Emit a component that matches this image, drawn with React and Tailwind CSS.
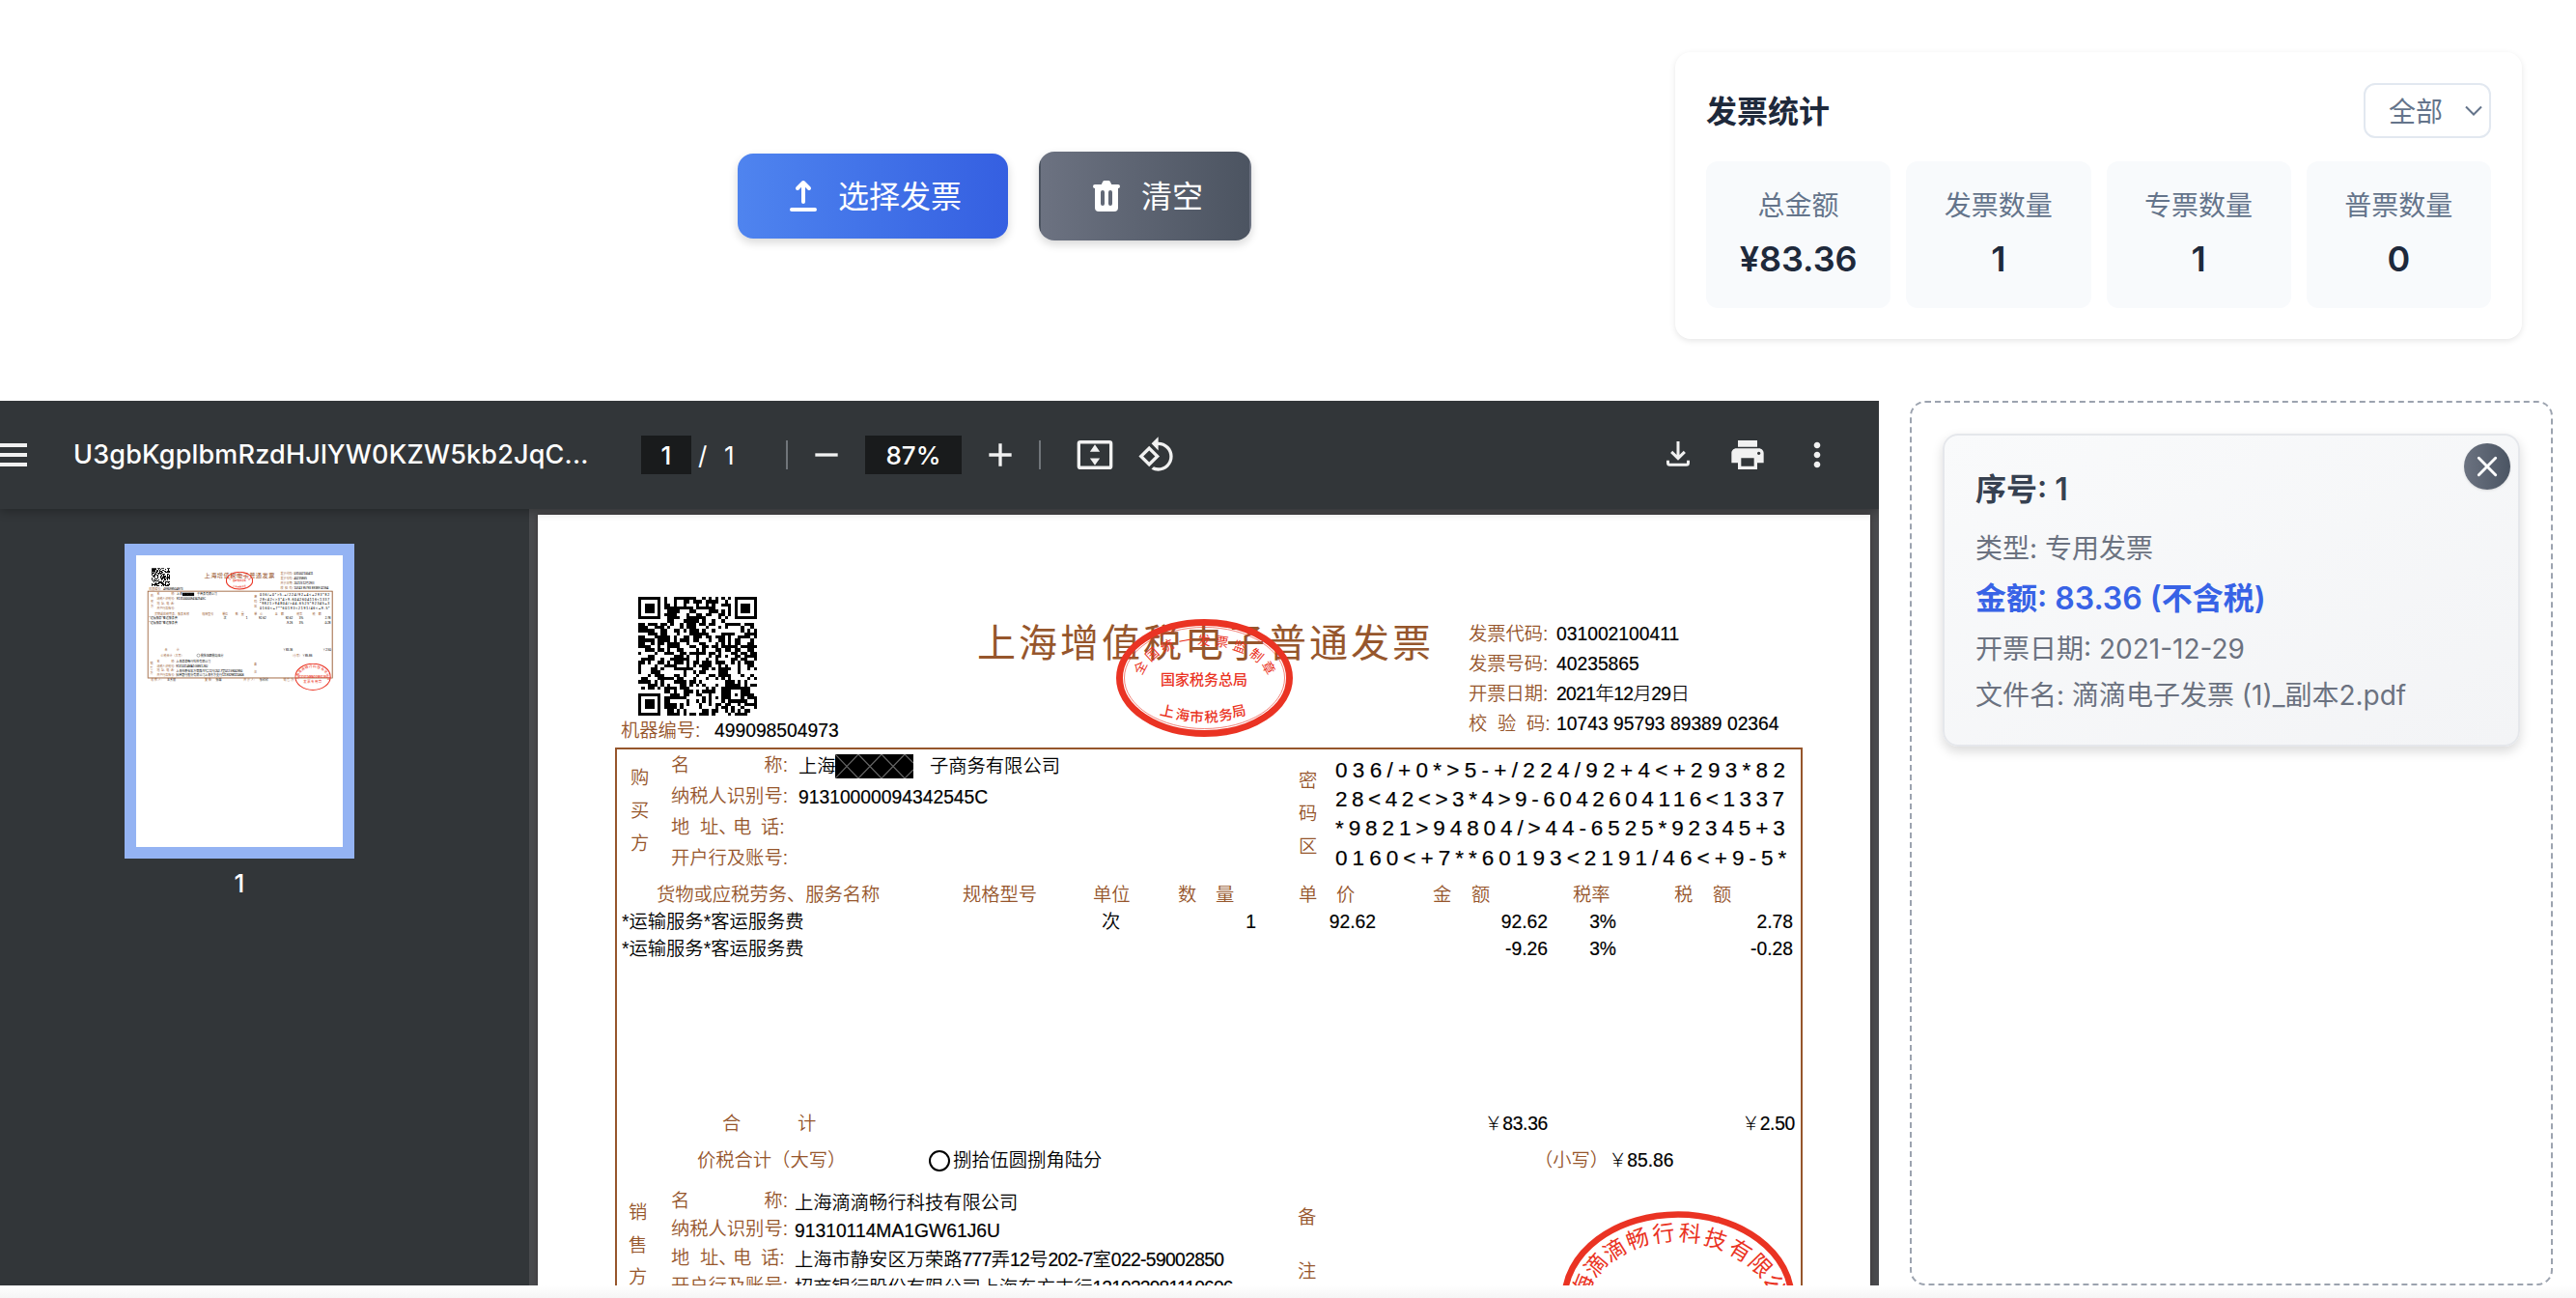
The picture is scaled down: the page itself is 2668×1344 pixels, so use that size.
import React from "react";

const UI = "font-['Inter','Noto_Sans_CJK_SC',sans-serif]";
const DOC = "font-['Liberation_Sans','Noto_Sans_CJK_SC',sans-serif]";

/* ---------- icons ---------- */

function UploadIcon() {
  return (
    <svg viewBox="0 0 20 20" className="size-10 shrink-0" fill="currentColor">
      <path
        fillRule="evenodd"
        clipRule="evenodd"
        d="M3 17a1 1 0 011-1h12a1 1 0 110 2H4a1 1 0 01-1-1zM6.293 6.707a1 1 0 010-1.414l3-3a1 1 0 011.414 0l3 3a1 1 0 01-1.414 1.414L11 5.414V13a1 1 0 11-2 0V5.414L7.707 6.707a1 1 0 01-1.414 0z"
      />
    </svg>
  );
}

function TrashIcon() {
  return (
    <svg viewBox="0 0 20 20" className="size-10 shrink-0" fill="currentColor">
      <path
        fillRule="evenodd"
        clipRule="evenodd"
        d="M9 2a1 1 0 00-.894.553L7.382 4H4a1 1 0 000 2v10a2 2 0 002 2h8a2 2 0 002-2V6a1 1 0 100-2h-3.382l-.724-1.447A1 1 0 0011 2H9zM7 8a1 1 0 012 0v6a1 1 0 11-2 0V8zm5-1a1 1 0 00-1 1v6a1 1 0 102 0V8a1 1 0 00-1-1z"
      />
    </svg>
  );
}

function ToolIcon({ d, className = "size-10" }) {
  return (
    <svg viewBox="0 0 24 24" className={"shrink-0 " + className} fill="#f1f1f1">
      <path fillRule="evenodd" d={d} />
    </svg>
  );
}

const MENU = "M3 18h18v-2H3v2zm0-5h18v-2H3v2zm0-7v2h18V6H3z";
const MINUS = "M5 11h14v2H5z";
const PLUS = "M19 13h-6v6h-2v-6H5v-2h6V5h2v6h6v2z";
const FIT =
  "M3 3h18a2 2 0 0 1 2 2v14a2 2 0 0 1-2 2H3a2 2 0 0 1-2-2V5a2 2 0 0 1 2-2zm0 2.1v13.8h18V5.1H3zM12 5.6l3.1 4.4H8.900zM12 18.500l3.100-4.400H8.900z";
const ROTATE =
  "M7.34 6.41L.86 12.9l6.49 6.48 6.49-6.48-6.5-6.49zM3.69 12.9l3.66-3.66L11 12.9l-3.66 3.66-3.65-3.66zm15.67-6.26C17.61 4.88 15.3 4 13 4V.76L8.76 5 13 9.24V6c1.79 0 3.58.68 4.95 2.05 2.73 2.73 2.73 7.17 0 9.9C16.58 19.32 14.79 20 13 20c-.97 0-1.94-.21-2.84-.61l-1.49 1.49C10.02 21.62 11.51 22 13 22c2.3 0 4.61-.88 6.36-2.64 3.52-3.51 3.52-9.21 0-12.72z";
const PRINT =
  "M19 8H5c-1.66 0-3 1.34-3 3v6h4v4h12v-4h4v-6c0-1.66-1.34-3-3-3zm-3 11H8v-5h8v5zm3-7c-.55 0-1-.45-1-1s.45-1 1-1 1 .45 1 1-.45 1-1 1zm-1-9H6v4h12V3z";
const MORE =
  "M12 8c1.1 0 2-.9 2-2s-.9-2-2-2-2 .9-2 2 .9 2 2 2zm0 2c-1.1 0-2 .9-2 2s.9 2 2 2 2-.9 2-2-.9-2-2-2zm0 6c-1.1 0-2 .9-2 2s.9 2 2 2 2-.9 2-2-.9-2-2-2z";

function DownloadIcon() {
  return (
    <svg viewBox="0 0 24 24" className="size-10 shrink-0" fill="none" stroke="#f1f1f1" strokeWidth="1.8">
      <path d="M12 3.600V14M7.900 10.100L12 14.200l4.100-4.100M5.700 15.500V17a1.200 1.200 0 0 0 1.200 1.200h10.200a1.200 1.200 0 0 0 1.200-1.200v-1.500" />
    </svg>
  );
}

/* ---------- header ---------- */

function Stat({ label, value }) {
  return (
    <div className="flex flex-col items-center rounded-xl bg-[#f8fafc] pt-[25px]">
      <div className="mb-[7px] text-[28px] leading-[42px] text-[#64748b]">{label}</div>
      <div className="text-[36px] leading-[54px] font-semibold text-[#1e293b]">{value}</div>
    </div>
  );
}

function Header() {
  return (
    <header className="flex h-[415px] items-start">
      <div className="mt-[157px] ml-[764px] flex items-center gap-8 text-[32px] text-white">
        <button className="flex h-[88px] w-[280px] items-center gap-4 rounded-2xl bg-linear-to-r from-[#4f84ef] to-[#355fe1] pl-12 shadow-[0_4px_10px_rgba(0,0,0,0.16)]">
          <UploadIcon />
          <span className="pt-[2px]">选择发票</span>
        </button>
        <button className="flex h-[92px] w-[220px] items-center gap-4 rounded-2xl border-2 border-transparent bg-linear-to-r from-[#6c7281] to-[#4c5461] pl-12 shadow-[0_4px_10px_rgba(0,0,0,0.16)]">
          <TrashIcon />
          <span className="pt-[2px]">清空</span>
        </button>
      </div>
      <section className="mt-[54px] ml-[439px] h-[297px] w-[877px] rounded-2xl bg-white p-8 shadow-[0_2px_6px_rgba(0,0,0,0.10)]">
        <div className="mb-6 flex h-[57px] items-center justify-between">
          <h2 className="pt-[3px] text-[32px] font-semibold text-[#1e293b]">发票统计</h2>
          <div className="flex h-[57px] w-[132px] items-center justify-between rounded-xl border-2 border-[#e2e8f0] pr-[7px] pl-6 text-[28px] text-[#64748b]">
            <span className="pt-[2px]">全部</span>
            <svg viewBox="0 0 18 11" className="h-[11px] w-[18px]" fill="none" stroke="#64748b" strokeWidth="2">
              <path d="M1 1.500l8 8 8-8" />
            </svg>
          </div>
        </div>
        <div className="grid h-[152px] grid-cols-4 gap-4">
          <Stat label="总金额" value="¥83.36" />
          <Stat label="发票数量" value="1" />
          <Stat label="专票数量" value="1" />
          <Stat label="普票数量" value="0" />
        </div>
      </section>
    </header>
  );
}

/* ---------- invoice document ---------- */

const QR_SIZE = 37;

function buildQr() {
  let seed = 20211229;
  const rnd = () => {
    seed = (seed * 1103515245 + 12345) % 2147483648;
    return seed / 2147483648;
  };
  const ring = (x, y, cx, cy, r) => {
    const d = Math.max(Math.abs(x - cx), Math.abs(y - cy));
    return d <= r ? d : -1;
  };
  let path = "";
  for (let y = 0; y < QR_SIZE; y++) {
    for (let x = 0; x < QR_SIZE; x++) {
      let on = rnd() > 0.5;
      for (const [cx, cy] of [[3, 3], [33, 3], [3, 33]]) {
        const d = ring(x, y, cx, cy, 4);
        if (d >= 0) on = d === 3 || d <= 1;
      }
      const a = ring(x, y, 30, 30, 2);
      if (a >= 0) on = a !== 1;
      if (on) path += `M${x} ${y}h1v1h-1z`;
    }
  }
  return path;
}

const QR_PATH = buildQr();

function Glyphs({ items, size, weight = 400 }) {
  return items.map(([ch, x, y, r], i) => (
    <text
      key={i}
      transform={`translate(${x} ${y}) rotate(${r})`}
      textAnchor="middle"
      dominantBaseline="central"
      fontSize={size}
      fontWeight={weight}
      fill="#ea3323"
    >
      {ch}
    </text>
  ));
}

function TaxSeal() {
  return (
    <svg viewBox="0 0 183 122" className="absolute top-[108px] left-[599px] h-[122px] w-[183px]">
      <ellipse cx="91.5" cy="61" rx="88" ry="57.500" fill="none" stroke="#ea3323" strokeWidth="7" />
      <ellipse cx="91.5" cy="61" rx="83" ry="52.500" fill="none" stroke="#ea3323" strokeOpacity="0.6" strokeWidth="1" />
      <Glyphs
        size={13.5}
        items={[
          ["全", 25.5, 50.5, -62],
          ["国", 37.5, 37, -42],
          ["统", 53, 28, -25],
          ["一", 71.5, 23, -10],
          ["发", 91, 22.5, 2],
          ["票", 109.5, 24, 8],
          ["监", 128, 29, 20],
          ["制", 145, 38, 40],
          ["章", 157.5, 50.5, 60],
        ]}
      />
      <text x="91" y="62" textAnchor="middle" dominantBaseline="central" fontSize="15" fontWeight="500" fill="#ea3323">
        国家税务总局
      </text>
      <Glyphs
        size={14.5}
        weight={500}
        items={[
          ["上", 53, 95.5, 12],
          ["海", 69, 99.5, 8],
          ["市", 83.5, 101.5, 2],
          ["税", 98.5, 101.5, -2],
          ["务", 113.5, 99.500, -8],
          ["局", 127, 95.500, -12],
        ]}
      />
    </svg>
  );
}

function CompanySeal() {
  return (
    <svg viewBox="0 0 242 182" className="absolute top-[721px] left-[1060px] h-[182px] w-[242px]">
      <ellipse cx="121" cy="91" rx="117.500" ry="87.500" fill="none" stroke="#ea3323" strokeWidth="6.5" />
      <Glyphs
        size={23}
        items={[
          ["上", 18, 99, -88],
          ["海", 22.5, 77, -68],
          ["滴", 36, 56, -50],
          ["滴", 55.5, 40.5, -32],
          ["畅", 79, 29, -20],
          ["行", 106, 23.5, -7],
          ["科", 133.5, 23.5, 6],
          ["技", 160, 29.5, 18],
          ["有", 185.5, 41, 32],
          ["限", 206, 56.5, 46],
          ["公", 221, 77, 64],
          ["司", 225, 99, 84],
        ]}
      />
      <text x="121" y="91" textAnchor="middle" dominantBaseline="central" fontSize="18" fontWeight="700" fill="#ea3323">
        91310114MA1GW61J6U
      </text>
      <text x="121" y="122" textAnchor="middle" dominantBaseline="central" fontSize="22" letterSpacing="3" fill="#ea3323">
        发票专用章
      </text>
    </svg>
  );
}

const BROWN = "font-[350] text-[#96562c] ";
const INK = "text-black [-webkit-text-stroke:0.2px_#000] ";
const HAN = "font-[350] text-black ";

function PartyLabels({ row }) {
  return (
    <div className={BROWN + "w-[121px] shrink-0"}>
      <div className={"flex items-center justify-between " + row}>
        <span>名</span>
        <span>称:</span>
      </div>
      <div className={"flex items-center " + row}>纳税人识别号:</div>
      <div className={"flex items-center " + row}>
        <span className="w-[30px]">地</span>
        <span className="w-[34px]">址、</span>
        <span className="w-[29px]">电</span>
        <span>话:</span>
      </div>
      <div className={"flex items-center " + row}>开户行及账号:</div>
    </div>
  );
}

function VerticalLabel({ text, className, step }) {
  return (
    <div className={BROWN + "shrink-0 " + className}>
      {text.split("").map((c) => (
        <div key={c} className={"flex items-center " + step}>
          {c}
        </div>
      ))}
    </div>
  );
}

function MetaRow({ label, children }) {
  return (
    <div className="flex h-[31px] items-center">
      <div className={BROWN + "w-[91px] whitespace-pre"}>{label}</div>
      <div className={INK}>{children}</div>
    </div>
  );
}

function ItemRow({ name, unit, qty, price, amount, rate, tax }) {
  return (
    <div className="flex h-[27.5px] items-center pl-[5px] text-right">
      <span className={HAN + "w-[497px] text-left"}>{name}</span>
      <span className={HAN + "w-[60px] text-left"}>{unit}</span>
      <span className={INK + "w-[100px]"}>{qty}</span>
      <span className={INK + "w-[124px]"}>{price}</span>
      <span className={INK + "w-[178px]"}>{amount}</span>
      <span className={INK + "w-[71px]"}>{rate}</span>
      <span className={INK + "w-[183px]"}>{tax}</span>
    </div>
  );
}

function Redaction() {
  return (
    <svg viewBox="0 0 81 25" className="mr-[17px] h-[25px] w-[81px]" fill="none" stroke="#666" strokeWidth="1.2">
      <rect width="81" height="25" fill="#000" stroke="none" />
      <path d="M0 0l24 25L48 0l24 25 9-9M0 25L24 0l24 25L72 0l9 9" />
    </svg>
  );
}

function Invoice({ frame = "" }) {
  return (
    <div className={DOC + " relative h-[1947px] w-[1380px] bg-white text-[19.3px] leading-none whitespace-nowrap"}>
      <div className="flex h-[241px]">
        <div className="w-[455px] pt-[85px] pl-[86px]">
          <svg viewBox="0 0 37 37" className="ml-[18px] size-[123px]" shapeRendering="crispEdges">
            <path d={QR_PATH} />
          </svg>
          <div className="mt-[4px] flex h-6 items-center">
            <span className={BROWN + "w-[97px]"}>机器编号:</span>
            <span className={INK}>499098504973</span>
          </div>
        </div>
        <h1 className="mt-[103px] flex h-[60px] w-[509px] items-center text-[40px] font-normal tracking-[3px] text-[#96562c]">
          上海增值税电子普通发票
        </h1>
        <div className="pt-[108px]">
          <MetaRow label="发票代码:">031002100411</MetaRow>
          <MetaRow label="发票号码:">40235865</MetaRow>
          <MetaRow label="开票日期:">
            <span className="tracking-[-0.6px]">
              2021<span className="font-light">年</span>12<span className="font-light">月</span>29
              <span className="font-light">日</span>
            </span>
          </MetaRow>
          <MetaRow label={"校  验  码:"}>10743 95793 89389 02364</MetaRow>
        </div>
      </div>

      <div className={"ml-20 h-[577px] w-[1230px] border-2 border-[#96562c] " + frame}>
        <div className="flex h-[136px]">
          <VerticalLabel text="购买方" className="w-14 pt-[13px] pl-[14px]" step="h-[34px]" />
          <PartyLabels row="h-8 pt-[2px]" />
          <div className="ml-[11px] w-[518px] shrink-0">
            <div className={HAN + "flex h-[35px] items-center"}>
              <span className="w-[38px]">上海</span>
              <Redaction />
              <span>子商务有限公司</span>
            </div>
            <div className={INK + "flex h-[30px] items-center"}>91310000094342545C</div>
          </div>
          <VerticalLabel text="密码区" className="w-[38px] pt-[16px]" step="h-[34px]" />
          <div className="pt-[7px] text-[22.500px] text-black [-webkit-text-stroke:0.2px_#000]">
            <div className="flex h-[30.3px] items-center tracking-[5.3px]">{"036/+0*>5-+/224/92+4<+293*82"}</div>
            <div className="flex h-[30.3px] items-center tracking-[4.52px]">{"28<42<>3*4>9-6042604116<1337"}</div>
            <div className="flex h-[30.3px] items-center tracking-[4.9px]">{"*9821>94804/>44-6525*92345+3"}</div>
            <div className="flex h-[30.3px] items-center tracking-[5.05px]">{"0160<+7**60193<2191/46<+9-5*"}</div>
          </div>
        </div>

        <div className={BROWN + "flex h-[29px] items-center pl-[41px]"}>
          <span className="w-[317px]">货物或应税劳务、服务名称</span>
          <span className="w-[135px]">规格型号</span>
          <span className="w-[88px]">单位</span>
          <span className="w-[39px]">数</span>
          <span className="w-[86px]">量</span>
          <span className="w-[39px]">单</span>
          <span className="w-[100px]">价</span>
          <span className="w-[40px]">金</span>
          <span className="w-[105px]">额</span>
          <span className="w-[105px]">税率</span>
          <span className="w-[40px]">税</span>
          <span>额</span>
        </div>
        <ItemRow name="*运输服务*客运服务费" unit="次" qty="1" price="92.62" amount="92.62" rate="3%" tax="2.78" />
        <ItemRow name="*运输服务*客运服务费" amount="-9.26" rate="3%" tax="-0.28" />

        <div className="mt-[149px] flex h-[38px] items-center pl-[109px]">
          <span className={BROWN + "w-[78px]"}>合</span>
          <span className={BROWN + "w-[678px]"}>计</span>
          <span className={INK + "w-[99px] text-right tracking-[-0.3px]"}>
            <span className="font-light [-webkit-text-stroke:0]">￥</span>83.36
          </span>
          <span className={INK + "w-[256px] text-right tracking-[-0.3px]"}>
            <span className="font-light [-webkit-text-stroke:0]">￥</span>2.50
          </span>
        </div>
        <div className="flex h-[38px] items-center pl-[83px]">
          <span className={BROWN + "w-[240px]"}>价税合计（大写）</span>
          <span className="mr-[3px] size-[22px] rounded-full border-[2.5px] border-black" />
          <span className={HAN + "w-[602px]"}>捌拾伍圆捌角陆分</span>
          <span className={BROWN + "w-[77px]"}>（小写）</span>
          <span className={INK}>
            <span className="font-light [-webkit-text-stroke:0]">￥</span>85.86
          </span>
        </div>

        <div className="mt-2 flex h-[122px]">
          <VerticalLabel text="销售方" className="w-14 pt-[10px] pl-[12px]" step="h-[33.5px]" />
          <PartyLabels row="h-[29.3px]" />
          <div className="ml-[7px] w-[521px] pt-[2px]">
            <div className={HAN + "flex h-[29.3px] items-center"}>上海滴滴畅行科技有限公司</div>
            <div className={INK + "flex h-[29.3px] items-center"}>91310114MA1GW61J6U</div>
            <div className="flex h-[29.3px] items-center">
              <span className={HAN}>上海市静安区万荣路</span>
              <span className={INK + "tracking-[-0.65px]"}>777</span>
              <span className={HAN}>弄</span>
              <span className={INK + "tracking-[-0.65px]"}>12</span>
              <span className={HAN}>号</span>
              <span className={INK + "tracking-[-0.65px]"}>202-7</span>
              <span className={HAN}>室</span>
              <span className={INK + "tracking-[-0.65px]"}>022-59002850</span>
            </div>
            <div className="flex h-[29.3px] items-center">
              <span className={HAN}>招商银行股份有限公司上海东方支行</span>
              <span className={INK + "tracking-[-0.85px]"}>121932981110606</span>
            </div>
          </div>
          <VerticalLabel text="备注" className="pt-1" step="h-14" />
        </div>
      </div>

      <div className={BROWN + "flex h-8 items-center pl-[98px]"}>
        <span className="w-[108px]">收 款 人:</span>
        <span className={HAN + "w-[252px]"}>王秀丽</span>
        <span className="w-[75px]">复 核:</span>
        <span className={HAN + "w-[185px]"}>张琳</span>
        <span className="w-[106px]">开 票 人:</span>
        <span className={HAN + "w-[160px]"}>张欣欣</span>
        <span>销 售 方:</span>
      </div>

      <TaxSeal />
      <CompanySeal />
    </div>
  );
}

/* ---------- pdf viewer ---------- */

function Toolbar() {
  return (
    <div className="relative z-10 flex h-28 items-center bg-[#323639] text-[26px] font-medium text-white shadow-[0_2px_10px_rgba(0,0,0,0.3)]">
      <ToolIcon d={MENU} className="-ml-[14px] size-12" />
      <span className="ml-[42px] w-[588px] text-[27px] tracking-[0.18px]">U3gbKgplbmRzdHJlYW0KZW5kb2JqC...</span>
      <span className="flex h-10 w-[52px] items-center justify-center bg-[#191b1c]">1</span>
      <span className="ml-[7px] w-[27px] font-normal">/</span>
      <span className="w-[64px] font-normal">1</span>
      <span className="h-[30px] w-[2px] bg-[#70757a]" />
      <span className="ml-[20px] flex">
        <ToolIcon d={MINUS} />
      </span>
      <span className="mr-5 ml-5 flex h-10 w-[100px] items-center justify-center bg-[#191b1c]">87%</span>
      <ToolIcon d={PLUS} />
      <span className="mr-9 ml-5 h-[30px] w-[2px] bg-[#70757a]" />
      <ToolIcon d={FIT} />
      <span className="ml-6 flex">
        <ToolIcon d={ROTATE} />
      </span>
      <div className="ml-auto flex gap-8 pr-11">
        <DownloadIcon />
        <ToolIcon d={PRINT} />
        <ToolIcon d={MORE} />
      </div>
    </div>
  );
}

function PdfViewer() {
  return (
    <section className="flex h-[916px] w-[1946px] shrink-0 flex-col overflow-hidden bg-[#4a4b4e]">
      <Toolbar />
      <div className="flex min-h-0 flex-1">
        <aside className="flex w-[548px] shrink-0 flex-col items-center bg-[#323639] pt-9 pr-[52px]">
          <div className="h-[326px] w-[238px] shrink-0 overflow-hidden border-12 border-[#94b3f3] bg-white">
            <div className="h-[302px] w-[214px] overflow-hidden">
              <div className="size-0 origin-top-left scale-[0.155]">
                <Invoice frame="outline-4 outline-[#96562c]" />
              </div>
            </div>
          </div>
          <div className="mt-2 text-[26px] leading-9 font-medium text-white">1</div>
        </aside>
        <div className="min-w-0 flex-1 overflow-hidden pt-[6px] pl-[9px]">
          <div className="h-[798px] w-[1380px] overflow-hidden shadow-[0_0_6px_rgba(40,30,30,0.5)]">
            <Invoice />
          </div>
        </div>
      </div>
    </section>
  );
}

/* ---------- invoice list ---------- */

function InvoiceCard() {
  return (
    <article className="relative flex h-[324px] w-[598px] flex-col rounded-2xl border-2 border-[#e5e7eb] bg-linear-to-br from-[#f9fafb] to-[#f3f4f6] p-8 text-[28px] leading-[42px] text-[#6b7280] shadow-[0_5px_12px_rgba(0,0,0,0.15)]">
      <h3 className="text-[32px] leading-[48px] font-semibold text-[#374151]">序号: 1</h3>
      <p className="mt-[16px]">类型: 专用发票</p>
      <p className="mt-[7px] text-[32px] leading-[48px] font-semibold text-[#3863e6]">金额: 83.36 (不含税)</p>
      <p className="mt-[7px]">开票日期: 2021-12-29</p>
      <p className="mt-[6px]">文件名: 滴滴电子发票 (1)_副本2.pdf</p>
      <button className="absolute top-2 right-2 flex size-12 items-center justify-center rounded-full bg-linear-to-r from-[#6b7280] to-[#4b5563] shadow-sm">
        <svg viewBox="0 0 24 24" className="size-8" fill="none" stroke="#fff" strokeWidth="2.2" strokeLinecap="round">
          <path d="M5.500 18.500L18.500 5.500M5.500 5.500l13 13" />
        </svg>
      </button>
    </article>
  );
}

export default function App() {
  return (
    <div className={UI + " flex h-[1344px] w-[2668px] flex-col overflow-hidden bg-white"}>
      <Header />
      <main className="flex h-[916px]">
        <PdfViewer />
        <section className="ml-8 h-[916px] w-[666px] rounded-2xl border-2 border-dashed border-[#9ca3af] p-8">
          <InvoiceCard />
        </section>
      </main>
      <footer className="flex-1 bg-linear-to-b from-white to-[#f5f5f5]" />
    </div>
  );
}
